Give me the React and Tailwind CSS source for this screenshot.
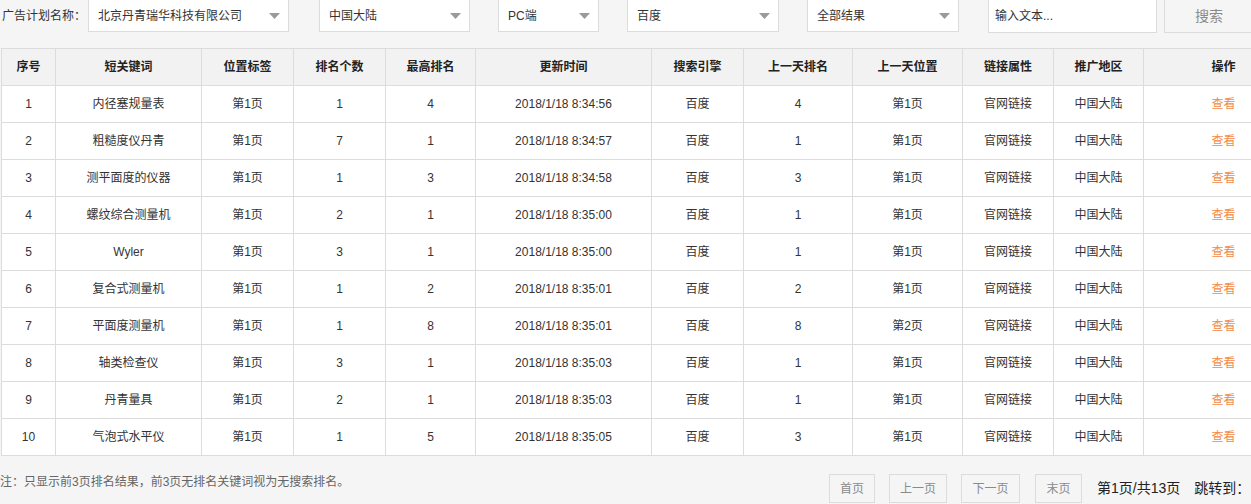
import React from "react";

const rows = [
  ["1", "内径塞规量表", "第1页", "1", "4", "2018/1/18 8:34:56", "百度", "4", "第1页"],
  ["2", "粗糙度仪丹青", "第1页", "7", "1", "2018/1/18 8:34:57", "百度", "1", "第1页"],
  ["3", "测平面度的仪器", "第1页", "1", "3", "2018/1/18 8:34:58", "百度", "3", "第1页"],
  ["4", "螺纹综合测量机", "第1页", "2", "1", "2018/1/18 8:35:00", "百度", "1", "第1页"],
  ["5", "Wyler", "第1页", "3", "1", "2018/1/18 8:35:00", "百度", "1", "第1页"],
  ["6", "复合式测量机", "第1页", "1", "2", "2018/1/18 8:35:01", "百度", "2", "第1页"],
  ["7", "平面度测量机", "第1页", "1", "8", "2018/1/18 8:35:01", "百度", "8", "第2页"],
  ["8", "轴类检查仪", "第1页", "3", "1", "2018/1/18 8:35:03", "百度", "1", "第1页"],
  ["9", "丹青量具", "第1页", "2", "1", "2018/1/18 8:35:03", "百度", "1", "第1页"],
  ["10", "气泡式水平仪", "第1页", "1", "5", "2018/1/18 8:35:05", "百度", "3", "第1页"],
];

const headers = ["序号", "短关键词", "位置标签", "排名个数", "最高排名", "更新时间", "搜索引擎", "上一天排名", "上一天位置", "链接属性", "推广地区", "操作"];
const widths = [54, 146, 92, 92, 90, 176, 92, 109, 110, 91, 90, 160];

function Arrow() {
  return (
    <svg width="11" height="6" viewBox="0 0 11 6" className="shrink-0">
      <path d="M0 0 L11 0 L5.5 6 Z" fill="#9a9a9a" />
    </svg>
  );
}

function Select({ w, text }) {
  return (
    <div className={`${w} h-[32px] shrink-0 bg-white border border-[#dcdcdc] border-t-0 flex items-center justify-between pl-[9px] pr-[8px] text-[12px] text-[#333]`}>
      <span className="whitespace-nowrap">{text}</span>
      <Arrow />
    </div>
  );
}

function PageBtn({ w, children }) {
  return (
    <div className={`${w} h-[29px] shrink-0 border border-[#dcdcdc] bg-[#f5f5f5] flex items-center justify-center text-[12px] text-[#8a8a8a]`}>
      {children}
    </div>
  );
}

export default function App() {
  return (
    <div
      className="w-full h-[504px] overflow-hidden bg-[#f5f5f5] text-[#333]"
      style={{ fontFamily: '"Liberation Sans", "Noto Sans CJK SC", sans-serif' }}
    >
      {/* top filter bar */}
      <div className="flex items-start h-[33px]">
        <div className="w-[88px] shrink-0 h-[32px] flex items-center pl-[2px] text-[12px] text-[#333] whitespace-nowrap">广告计划名称：</div>
        <Select w="w-[201px]" text="北京丹青瑞华科技有限公司" />
        <div className="w-[30px] shrink-0" />
        <Select w="w-[151px]" text="中国大陆" />
        <div className="w-[28px] shrink-0" />
        <Select w="w-[101px]" text="PC端" />
        <div className="w-[28px] shrink-0" />
        <Select w="w-[152px]" text="百度" />
        <div className="w-[28px] shrink-0" />
        <Select w="w-[152px]" text="全部结果" />
        <div className="w-[29px] shrink-0" />
        <div className="w-[169px] h-[33px] shrink-0 bg-white border border-[#dcdcdc] border-t-0 flex items-center pl-[6px] text-[12px] text-[#333]">
          输入文本...
        </div>
        <div className="w-[7px] shrink-0" />
        <div className="w-[90px] h-[33px] shrink-0 bg-[#f5f5f5] border border-[#dcdcdc] border-t-0 flex items-center justify-center text-[14px] text-[#8a8a8a]">
          搜索
        </div>
      </div>

      {/* table */}
      <div className="mt-[15px] pl-px">
        <table className="table-fixed border-collapse text-[12px]" style={{ width: 1302 }}>
          <colgroup>
            {widths.map((w, i) => (
              <col key={i} style={{ width: w }} />
            ))}
          </colgroup>
          <thead>
            <tr className="h-[37px] bg-[#f2f2f2]">
              {headers.map((h, i) => (
                <th key={i} className="border border-[#dcdcdc] font-bold text-[#222] text-center p-0">
                  {h}
                </th>
              ))}
            </tr>
          </thead>
          <tbody>
            {rows.map((r, ri) => (
              <tr key={ri} className="h-[37px] bg-white">
                {r.map((c, ci) => (
                  <td key={ci} className="border border-[#dcdcdc] text-center p-0 text-[#333]">
                    {c}
                  </td>
                ))}
                <td className="border border-[#dcdcdc] text-center p-0 text-[#333]">官网链接</td>
                <td className="border border-[#dcdcdc] text-center p-0 text-[#333]">中国大陆</td>
                <td className="border border-[#dcdcdc] text-center p-0 text-[#f28a48]">查看</td>
              </tr>
            ))}
          </tbody>
        </table>
      </div>

      {/* footer */}
      <div className="flex items-start mt-[18px]">
        <div className="w-[829px] shrink-0 text-[12px] text-[#666] pt-[1px] leading-[14px]">
          注：只显示前3页排名结果，前3页无排名关键词视为无搜索排名。
        </div>
        <div className="flex items-center shrink-0">
          <PageBtn w="w-[46px]">首页</PageBtn>
          <div className="w-[14px] shrink-0" />
          <PageBtn w="w-[58px]">上一页</PageBtn>
          <div className="w-[14px] shrink-0" />
          <PageBtn w="w-[59px]">下一页</PageBtn>
          <div className="w-[15px] shrink-0" />
          <PageBtn w="w-[47px]">末页</PageBtn>
          <div className="w-[15px] shrink-0 " />
          <span className="text-[14px] text-[#222] shrink-0 whitespace-nowrap">第1页/共13页</span>
          <div className="w-[14px] shrink-0" />
          <span className="text-[14px] text-[#222] shrink-0 whitespace-nowrap">跳转到：</span>
          <div className="w-[2px] shrink-0" />
          <div className="w-[40px] h-[29px] shrink-0 bg-white border border-[#dcdcdc]" />
        </div>
      </div>
    </div>
  );
}
